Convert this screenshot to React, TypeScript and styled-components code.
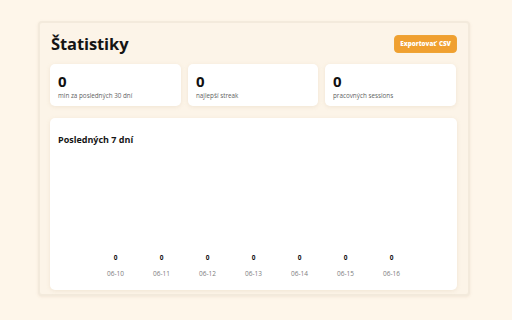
import React from "react";
import styled, { createGlobalStyle } from "styled-components";

const Global = createGlobalStyle`
  html, body { margin: 0; padding: 0; background: #fef6ea; }
  body { font-family: "Open Sans", "Noto Sans", "Liberation Sans", sans-serif; color: #1a1a1a; }
`;

const Page = styled.div`
  width: 512px;
  height: 320px;
  padding: 21px 42px 0 38px;
  box-sizing: border-box;
`;

const Panel = styled.div`
  width: 432px;
  height: 275px;
  box-sizing: border-box;
  background: #fcf4e8;
  border: 2px solid #f3eadc;
  border-radius: 4px;
  box-shadow: 0 1px 3px rgba(180, 150, 110, 0.15);
  padding: 7px 11px 0 10px;
  display: flex;
  flex-direction: column;
`;

const Header = styled.div`
  display: flex;
  align-items: center;
  justify-content: space-between;
  height: 27px;
  margin-bottom: 7px;
`;

const Title = styled.h1`
  margin: 0 0 0 1px;
  font-size: 16.5px;
  font-weight: 700;
  color: #141414;
  letter-spacing: -0.1px;
`;

const ExportButton = styled.button`
  height: 18px;
  padding: 0 5px;
  border: 1px solid #eea436;
  border-radius: 4px;
  background: #f0a030;
  color: #fff;
  font-family: inherit;
  font-size: 6.3px;
  font-weight: 800;
  word-spacing: 1px;
  cursor: pointer;
`;

const Cards = styled.div`
  display: grid;
  grid-template-columns: 131px 130px 131px;
  gap: 7px;
  margin-bottom: 12px;
`;

const Card = styled.div`
  background: #fff;
  border-radius: 5px;
  box-shadow: 0 1px 4px rgba(190, 160, 120, 0.18);
`;

const StatCard = styled(Card)`
  height: 42px;
  padding: 9px 8px 0;
  box-sizing: border-box;
`;

const StatValue = styled.div`
  font-size: 15px;
  font-weight: 700;
  line-height: 17px;
  color: #111;
`;

const StatLabel = styled.div`
  font-size: 6.3px;
  line-height: 9px;
  margin-top: 1px;
  color: #5f5f5f;
`;

const ChartCard = styled(Card)`
  height: 172px;
  padding: 16px 8px 0;
  box-sizing: border-box;
  display: flex;
  flex-direction: column;
`;

const ChartTitle = styled.div`
  font-size: 9px;
  font-weight: 700;
  line-height: 12px;
  color: #151515;
`;

const Bars = styled.div`
  flex: 1;
  display: flex;
  justify-content: center;
  align-items: flex-end;
  padding-bottom: 12px;
`;

const Column = styled.div`
  width: 46px;
  display: flex;
  flex-direction: column;
  align-items: center;
`;

const ColValue = styled.div`
  font-size: 6.5px;
  font-weight: 700;
  line-height: 8px;
  color: #111;
`;

const ColLabel = styled.div`
  font-size: 6.5px;
  line-height: 9px;
  margin-top: 7px;
  color: #7d7d7d;
`;

const stats = [
  { value: 0, label: "min za posledných 30 dní" },
  { value: 0, label: "najlepší streak" },
  { value: 0, label: "pracovných sessions" },
];

const days = ["06-10", "06-11", "06-12", "06-13", "06-14", "06-15", "06-16"];

export default function App() {
  return (
    <>
      <Global />
      <Page>
        <Panel>
          <Header>
            <Title>Štatistiky</Title>
            <ExportButton>Exportovať CSV</ExportButton>
          </Header>
          <Cards>
            {stats.map((s) => (
              <StatCard key={s.label}>
                <StatValue>{s.value}</StatValue>
                <StatLabel>{s.label}</StatLabel>
              </StatCard>
            ))}
          </Cards>
          <ChartCard>
            <ChartTitle>Posledných 7 dní</ChartTitle>
            <Bars>
              {days.map((d) => (
                <Column key={d}>
                  <ColValue>0</ColValue>
                  <ColLabel>{d}</ColLabel>
                </Column>
              ))}
            </Bars>
          </ChartCard>
        </Panel>
      </Page>
    </>
  );
}
